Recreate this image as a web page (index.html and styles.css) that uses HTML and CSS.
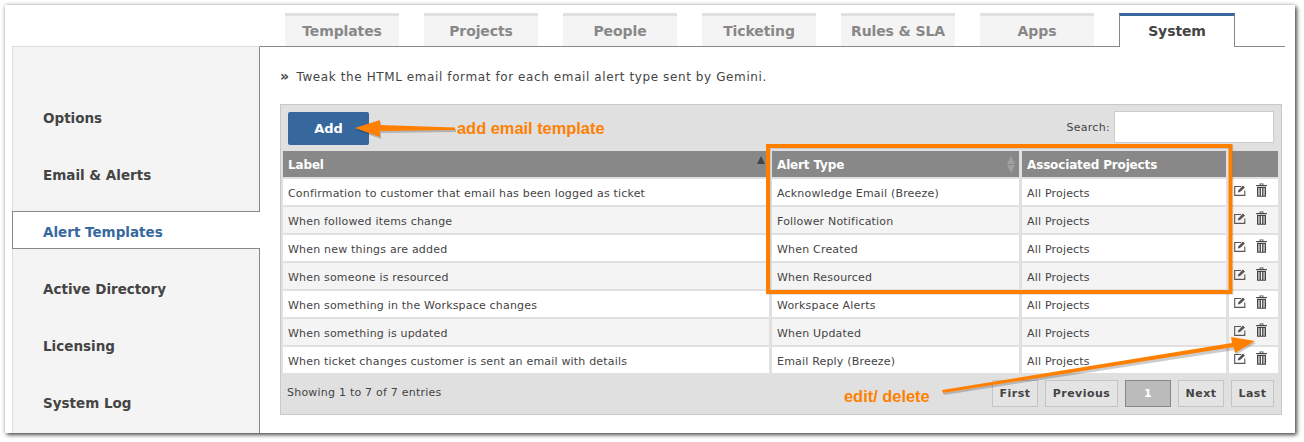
FILE: index.html
```html
<!DOCTYPE html>
<html lang="en">
<head>
    <meta charset="UTF-8">
    <meta name="viewport" content="width=device-width, initial-scale=1.0">
    <title>Alert Templates</title>
    <link rel="stylesheet" href="styles.css">
</head>
<body>
    <svg class="defs" width="0" height="0">
        <symbol id="icon-edit" viewBox="0 0 12 11">
            <path d="M7 1.500H.7V10.400H10.800V5.500" fill="none" stroke="#555" stroke-width="1.100"/>
            <path d="M3.800 7.600L4.300 5.500L8.800.6L11 2.500L6 7.100Z" fill="#555"/>
        </symbol>
        <symbol id="icon-trash" viewBox="0 0 11 14">
            <path d="M3.600 2V.5H7.400V2H10.800V3.200H.2V2ZM4.600 1.300V2H6.400V1.300Z" fill="#444" fill-rule="evenodd"/>
            <path d="M1 3.900H10V13.800H1ZM2.400 5V12.800H3.500V5ZM4.900 5V12.800H6.100V5ZM7.500 5V12.800H8.600V5Z" fill="#444" fill-rule="evenodd"/>
        </symbol>
    </svg>

    <div class="frame">
        <!-- Top tabs -->
        <ul class="tabs">
            <li class="tab">Templates</li>
            <li class="tab">Projects</li>
            <li class="tab">People</li>
            <li class="tab">Ticketing</li>
            <li class="tab">Rules &amp; SLA</li>
            <li class="tab">Apps</li>
            <li class="tab tab-active">System</li>
        </ul>

        <div class="main">
            <!-- Side menu -->
            <ul class="sidenav">
                <li class="sidenav-item">Options</li>
                <li class="sidenav-item">Email &amp; Alerts</li>
                <li class="sidenav-item sidenav-active">Alert Templates</li>
                <li class="sidenav-item">Active Directory</li>
                <li class="sidenav-item">Licensing</li>
                <li class="sidenav-item">System Log</li>
            </ul>

            <div class="content">
                <p class="intro"><span class="quote">&raquo;</span> Tweak the HTML email format for each email alert type sent by Gemini.</p>

                <div class="panel">
                    <div class="panel-top">
                        <button class="btn-add">Add</button>
                        <label class="search">Search: <input type="text" class="search-input"></label>
                    </div>

                    <table class="grid">
                        <thead>
                            <tr>
                                <th class="col-label">Label<span class="sort-up"></span></th>
                                <th class="col-type">Alert Type<span class="sort-both"></span></th>
                                <th class="col-proj">Associated Projects</th>
                                <th class="col-act"></th>
                            </tr>
                        </thead>
                        <tbody>
                            <tr>
                                <td>Confirmation to customer that email has been logged as ticket</td>
                                <td>Acknowledge Email (Breeze)</td>
                                <td>All Projects</td>
                                <td class="actions"><svg class="ico-edit"><use href="#icon-edit"/></svg><svg class="ico-trash"><use href="#icon-trash"/></svg></td>
                            </tr>
                            <tr>
                                <td>When followed items change</td>
                                <td>Follower Notification</td>
                                <td>All Projects</td>
                                <td class="actions"><svg class="ico-edit"><use href="#icon-edit"/></svg><svg class="ico-trash"><use href="#icon-trash"/></svg></td>
                            </tr>
                            <tr>
                                <td>When new things are added</td>
                                <td>When Created</td>
                                <td>All Projects</td>
                                <td class="actions"><svg class="ico-edit"><use href="#icon-edit"/></svg><svg class="ico-trash"><use href="#icon-trash"/></svg></td>
                            </tr>
                            <tr>
                                <td>When someone is resourced</td>
                                <td>When Resourced</td>
                                <td>All Projects</td>
                                <td class="actions"><svg class="ico-edit"><use href="#icon-edit"/></svg><svg class="ico-trash"><use href="#icon-trash"/></svg></td>
                            </tr>
                            <tr>
                                <td>When something in the Workspace changes</td>
                                <td>Workspace Alerts</td>
                                <td>All Projects</td>
                                <td class="actions"><svg class="ico-edit"><use href="#icon-edit"/></svg><svg class="ico-trash"><use href="#icon-trash"/></svg></td>
                            </tr>
                            <tr>
                                <td>When something is updated</td>
                                <td>When Updated</td>
                                <td>All Projects</td>
                                <td class="actions"><svg class="ico-edit"><use href="#icon-edit"/></svg><svg class="ico-trash"><use href="#icon-trash"/></svg></td>
                            </tr>
                            <tr>
                                <td>When ticket changes customer is sent an email with details</td>
                                <td>Email Reply (Breeze)</td>
                                <td>All Projects</td>
                                <td class="actions"><svg class="ico-edit"><use href="#icon-edit"/></svg><svg class="ico-trash"><use href="#icon-trash"/></svg></td>
                            </tr>
                        </tbody>
                    </table>

                    <div class="panel-foot">
                        <span class="info">Showing 1 to 7 of 7 entries</span>
                        <div class="pager">
                            <a class="page page-first">First</a>
                            <a class="page page-prev">Previous</a>
                            <a class="page page-current">1</a>
                            <a class="page page-next">Next</a>
                            <a class="page page-last">Last</a>
                        </div>
                    </div>
                </div>
            </div>
        </div>
    </div>

    <!-- Orange annotations drawn over the screenshot -->
    <svg class="notes" width="1304" height="442">
        <rect class="note-shadow" x="769" y="147" width="462.500" height="146"/>
        <rect class="note-box" x="768" y="146" width="462.500" height="146"/>
        <path class="arrow-shadow" d="M356 130L381 122L381 127L456 129L456 132L381 133L381 139Z"/>
        <path class="arrow" d="M355 128L380 120L380 125L455 127.500L455 130L380 131L380 137Z"/>
        <path class="arrow-shadow" d="M943 393L1233 345L1232 339L1256 343L1236 355L1235 350L944 395Z"/>
        <path class="arrow" d="M942 390L1232 343L1231 337L1255 341L1235 353L1233.500 347L943 393Z"/>
    </svg>
    <span class="note-text note-add">add email template</span>
    <span class="note-text note-edit">edit/ delete</span>
</body>
</html>
```

FILE: styles.css
```css
* {
    box-sizing: border-box;
}
html, body {
    margin: 0;
    padding: 0;
}
body {
    width: 1304px;
    height: 442px;
    overflow: hidden;
    background-color: #fff;
    color: #444;
    font-family: "DejaVu Sans", Verdana, sans-serif;
    font-size: 11px;
}
.defs {
    position: absolute;
}

.frame {
    width: 1290px;
    height: 428px;
    margin: 5px 0 0 5px;
    padding: 8px 10px 0 7px;
    background-color: #fff;
    box-shadow: 2px 2px 4px rgba(0, 0, 0, .65), 0 0 4px rgba(0, 0, 0, .25);
    display: flex;
    flex-direction: column;
    overflow: hidden;
}

/* top tabs */
.tabs {
    display: flex;
    gap: 25px;
    height: 34px;
    margin: 0 0 0 248px;
    padding: 0 0 0 25px;
    list-style: none;
    border-bottom: 1px solid #888;
}
.tab {
    width: 114px;
    height: 33px;
    padding-top: 7px;
    background-color: #f4f4f4;
    border-top: 3px solid #e0e0e0;
    color: #888;
    font-size: 14px;
    font-weight: bold;
    letter-spacing: -.1px;
    text-align: center;
}
.tab-active {
    width: 116px;
    height: 34px;
    background-color: #fff;
    border-top-color: #36689e;
    border-left: 1px solid #888;
    border-right: 1px solid #888;
    color: #444;
}

.main {
    display: flex;
    flex: 1;
    margin-top: -1px;
}

/* side menu */
.sidenav {
    display: flex;
    flex-direction: column;
    gap: 19px;
    width: 248px;
    margin: 0;
    padding: 50px 0 0;
    list-style: none;
    background-color: #f4f4f4;
    border-top: 1px solid #ddd;
    border-left: 1px solid #ddd;
    border-right: 1px solid #888;
}
.sidenav-item {
    height: 38px;
    padding: 13px 0 0 30px;
    font-size: 13.500px;
    font-weight: bold;
}
.sidenav-active {
    margin: 0 -1px;
    padding-top: 12px;
    background-color: #fff;
    border: 1px solid #888;
    border-right: none;
    color: #36689e;
}

/* content */
.content {
    flex: 1;
    padding: 23px 0 0 20px;
}
.intro {
    height: 35px;
    margin: 0;
    font-size: 12px;
    letter-spacing: .6px;
    line-height: 14px;
}
.quote {
    margin-right: 3px;
    font-size: 14px;
    font-weight: bold;
    letter-spacing: 0;
}
.panel {
    width: 1002px;
    height: 311px;
    background-color: #e0e0e0;
    border: 1px solid #c8c8c8;
}
.panel-top {
    display: flex;
    justify-content: space-between;
    height: 46px;
    padding: 7px 7px 0 7px;
}
.btn-add {
    width: 81px;
    height: 33px;
    background-color: #36689e;
    border: none;
    border-radius: 2px;
    color: #fff;
    font-family: inherit;
    font-size: 13px;
    font-weight: bold;
    cursor: pointer;
}
.search {
    display: flex;
    align-items: center;
    gap: 4px;
    height: 32px;
    margin-top: -1px;
    font-size: 11px;
    letter-spacing: .3px;
}
.search-input {
    width: 160px;
    height: 32px;
    background-color: #fff;
    border: 1px solid #ccc;
}

/* table */
.grid {
    width: 995px;
    margin: -2px 0 0 2px;
    border-collapse: separate;
    border-spacing: 0 2px;
    table-layout: fixed;
}
.grid th,
.grid td {
    height: 26px;
    padding: 2px 5px 0;
    border-right: 3px solid #e0e0e0;
    text-align: left;
    white-space: nowrap;
    overflow: hidden;
}
.grid th:last-child,
.grid td:last-child {
    border-right: none;
}
.grid th {
    position: relative;
    background-color: #888;
    color: #fff;
    font-size: 12px;
    font-weight: bold;
    letter-spacing: -.15px;
}
.grid td {
    background-color: #fff;
    letter-spacing: .19px;
}
.grid tbody tr:nth-child(even) td {
    background-color: #f4f4f4;
}
.col-label {
    width: 489px;
}
.col-type {
    width: 250px;
}
.col-proj {
    width: 207px;
}
.sort-up,
.sort-both {
    position: absolute;
    right: 4px;
    top: 5px;
    width: 0;
    height: 0;
    border-left: 4.500px solid transparent;
    border-right: 4.500px solid transparent;
    border-bottom: 8px solid #444;
}
.sort-both {
    border-bottom-color: #a0a0a0;
}
.sort-both::after {
    content: "";
    position: absolute;
    left: -4.500px;
    top: 8.500px;
    border-left: 4.500px solid transparent;
    border-right: 4.500px solid transparent;
    border-top: 8px solid #a0a0a0;
}
.grid td.actions {
    padding: 0 0 4px 5px;
}
.actions svg {
    display: inline-block;
    vertical-align: middle;
}
.ico-edit {
    width: 12px;
    height: 11px;
    margin-right: 10px;
}
.ico-trash {
    width: 11px;
    height: 14px;
}

/* footer */
.panel-foot {
    display: flex;
    justify-content: space-between;
    padding: 5px 7px 0 6px;
}
.info {
    padding-top: 6px;
    letter-spacing: .22px;
}
.pager {
    display: flex;
    gap: 7px;
}
.page {
    height: 27px;
    line-height: 25px;
    background-color: #e4e4e4;
    border: 1px solid #c4c4c4;
    font-weight: bold;
    letter-spacing: .45px;
    text-align: center;
}
.page-first,
.page-next {
    width: 46px;
}
.page-prev {
    width: 73px;
}
.page-last {
    width: 43px;
}
.page-current {
    width: 46px;
    background-color: #bbb;
    border-color: #888;
    color: #fff;
}

/* annotations */
.notes {
    position: absolute;
    left: 0;
    top: 0;
}
.note-box {
    fill: none;
    stroke: #ff8000;
    stroke-width: 4;
}
.note-shadow {
    fill: none;
    stroke: rgba(0, 0, 0, .1);
    stroke-width: 4;
}
.arrow {
    fill: #ff8000;
}
.arrow-shadow {
    fill: rgba(0, 0, 0, .2);
}
.note-text {
    position: absolute;
    color: #ff8000;
    font-family: "Liberation Sans", Arial, sans-serif;
    font-size: 16.400px;
    font-weight: bold;
    line-height: 18px;
    white-space: nowrap;
}
.note-add {
    left: 457px;
    top: 119px;
}
.note-edit {
    left: 844px;
    top: 387px;
}
```
